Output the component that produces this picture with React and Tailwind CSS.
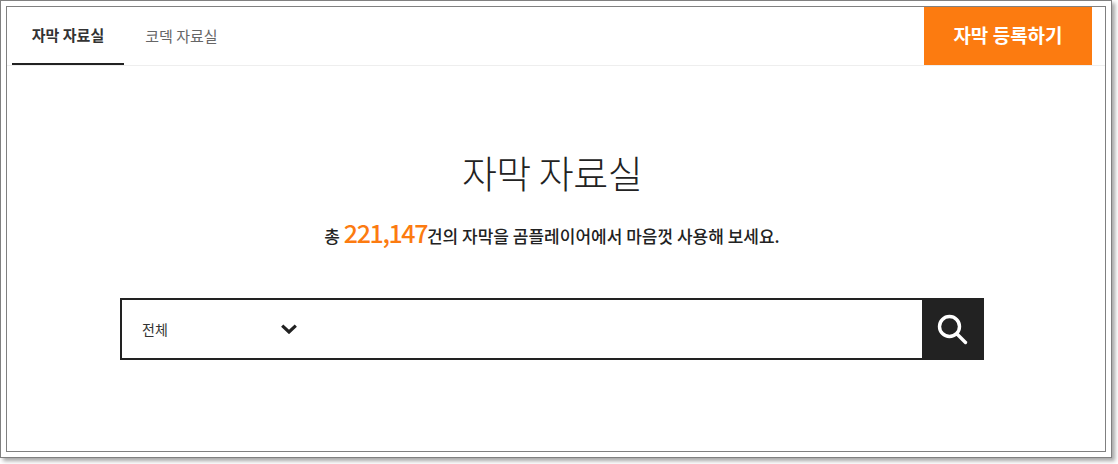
export default function App() {
  return (
    <div className="w-[1118px] h-[464px] bg-white font-['Noto_Sans_CJK_KR',sans-serif] overflow-hidden">
      {/* outer window frame */}
      <div className="w-[1112px] h-[458px] border border-[#808080] bg-white p-[5px] shadow-[3px_3px_4px_rgba(0,0,0,0.35)]">
        <div className="h-full border border-[#808080] flex flex-col">
          <div className="flex justify-between h-[59px] border-b border-[#eeeeee] pl-[5px] pr-[13px]">
            <div className="flex">
              <div className="w-[112px] h-[58px] border-b-2 border-[#222222] flex items-center justify-center text-[15px] font-bold text-[#333333]">
                자막 자료실
              </div>
              <div className="w-[93px] ml-[11px] h-[58px] flex items-center justify-center text-[15px] text-[#666666]">
                코덱 자료실
              </div>
            </div>
            <div className="w-[168px] h-[58px] pb-[2px] bg-[#fc7b10] flex items-center justify-center text-white text-[19px] font-bold">
              자막 등록하기
            </div>
          </div>

          <div className="flex flex-col items-center pr-[8px]">
            <h1 className="mt-[81px] text-[38px] leading-[50px] font-light text-[#222222] tracking-[-0.5px]">자막 자료실</h1>
            <p className="mt-[17px] flex items-baseline h-[34px] text-[17px] font-medium text-[#222222]">
              총&nbsp;<span className="text-[25px] text-[#fc7b10] tracking-[-1.4px]">221,147</span>건의 자막을 곰플레이어에서 마음껏 사용해 보세요.
            </p>
            <div className="mt-[50px] w-[864px] h-[62px] flex border-2 border-[#222222]">
              <div className="w-[190px] flex items-center justify-between pl-[20px] pr-[15px] text-[14px] text-[#333333]">
                <span>전체</span>
                <svg width="16" height="10" viewBox="0 0 16 10" fill="none" stroke="#222222" strokeWidth="3.2">
                  <path d="M1.2 1.6L8 8l6.8-6.4" />
                </svg>
              </div>
              <div className="flex-1" />
              <div className="w-[62px] -mr-[2px] -my-[2px] pr-[2px] bg-[#222222] flex items-center justify-center">
                <svg width="32" height="32" viewBox="0 0 32 32" fill="none" stroke="white" strokeWidth="3.4">
                  <circle cx="13.5" cy="13.5" r="10" />
                  <path d="M21 21l8.5 8.5" strokeLinecap="round" />
                </svg>
              </div>
            </div>
          </div>
        </div>
      </div>
    </div>
  );
}
